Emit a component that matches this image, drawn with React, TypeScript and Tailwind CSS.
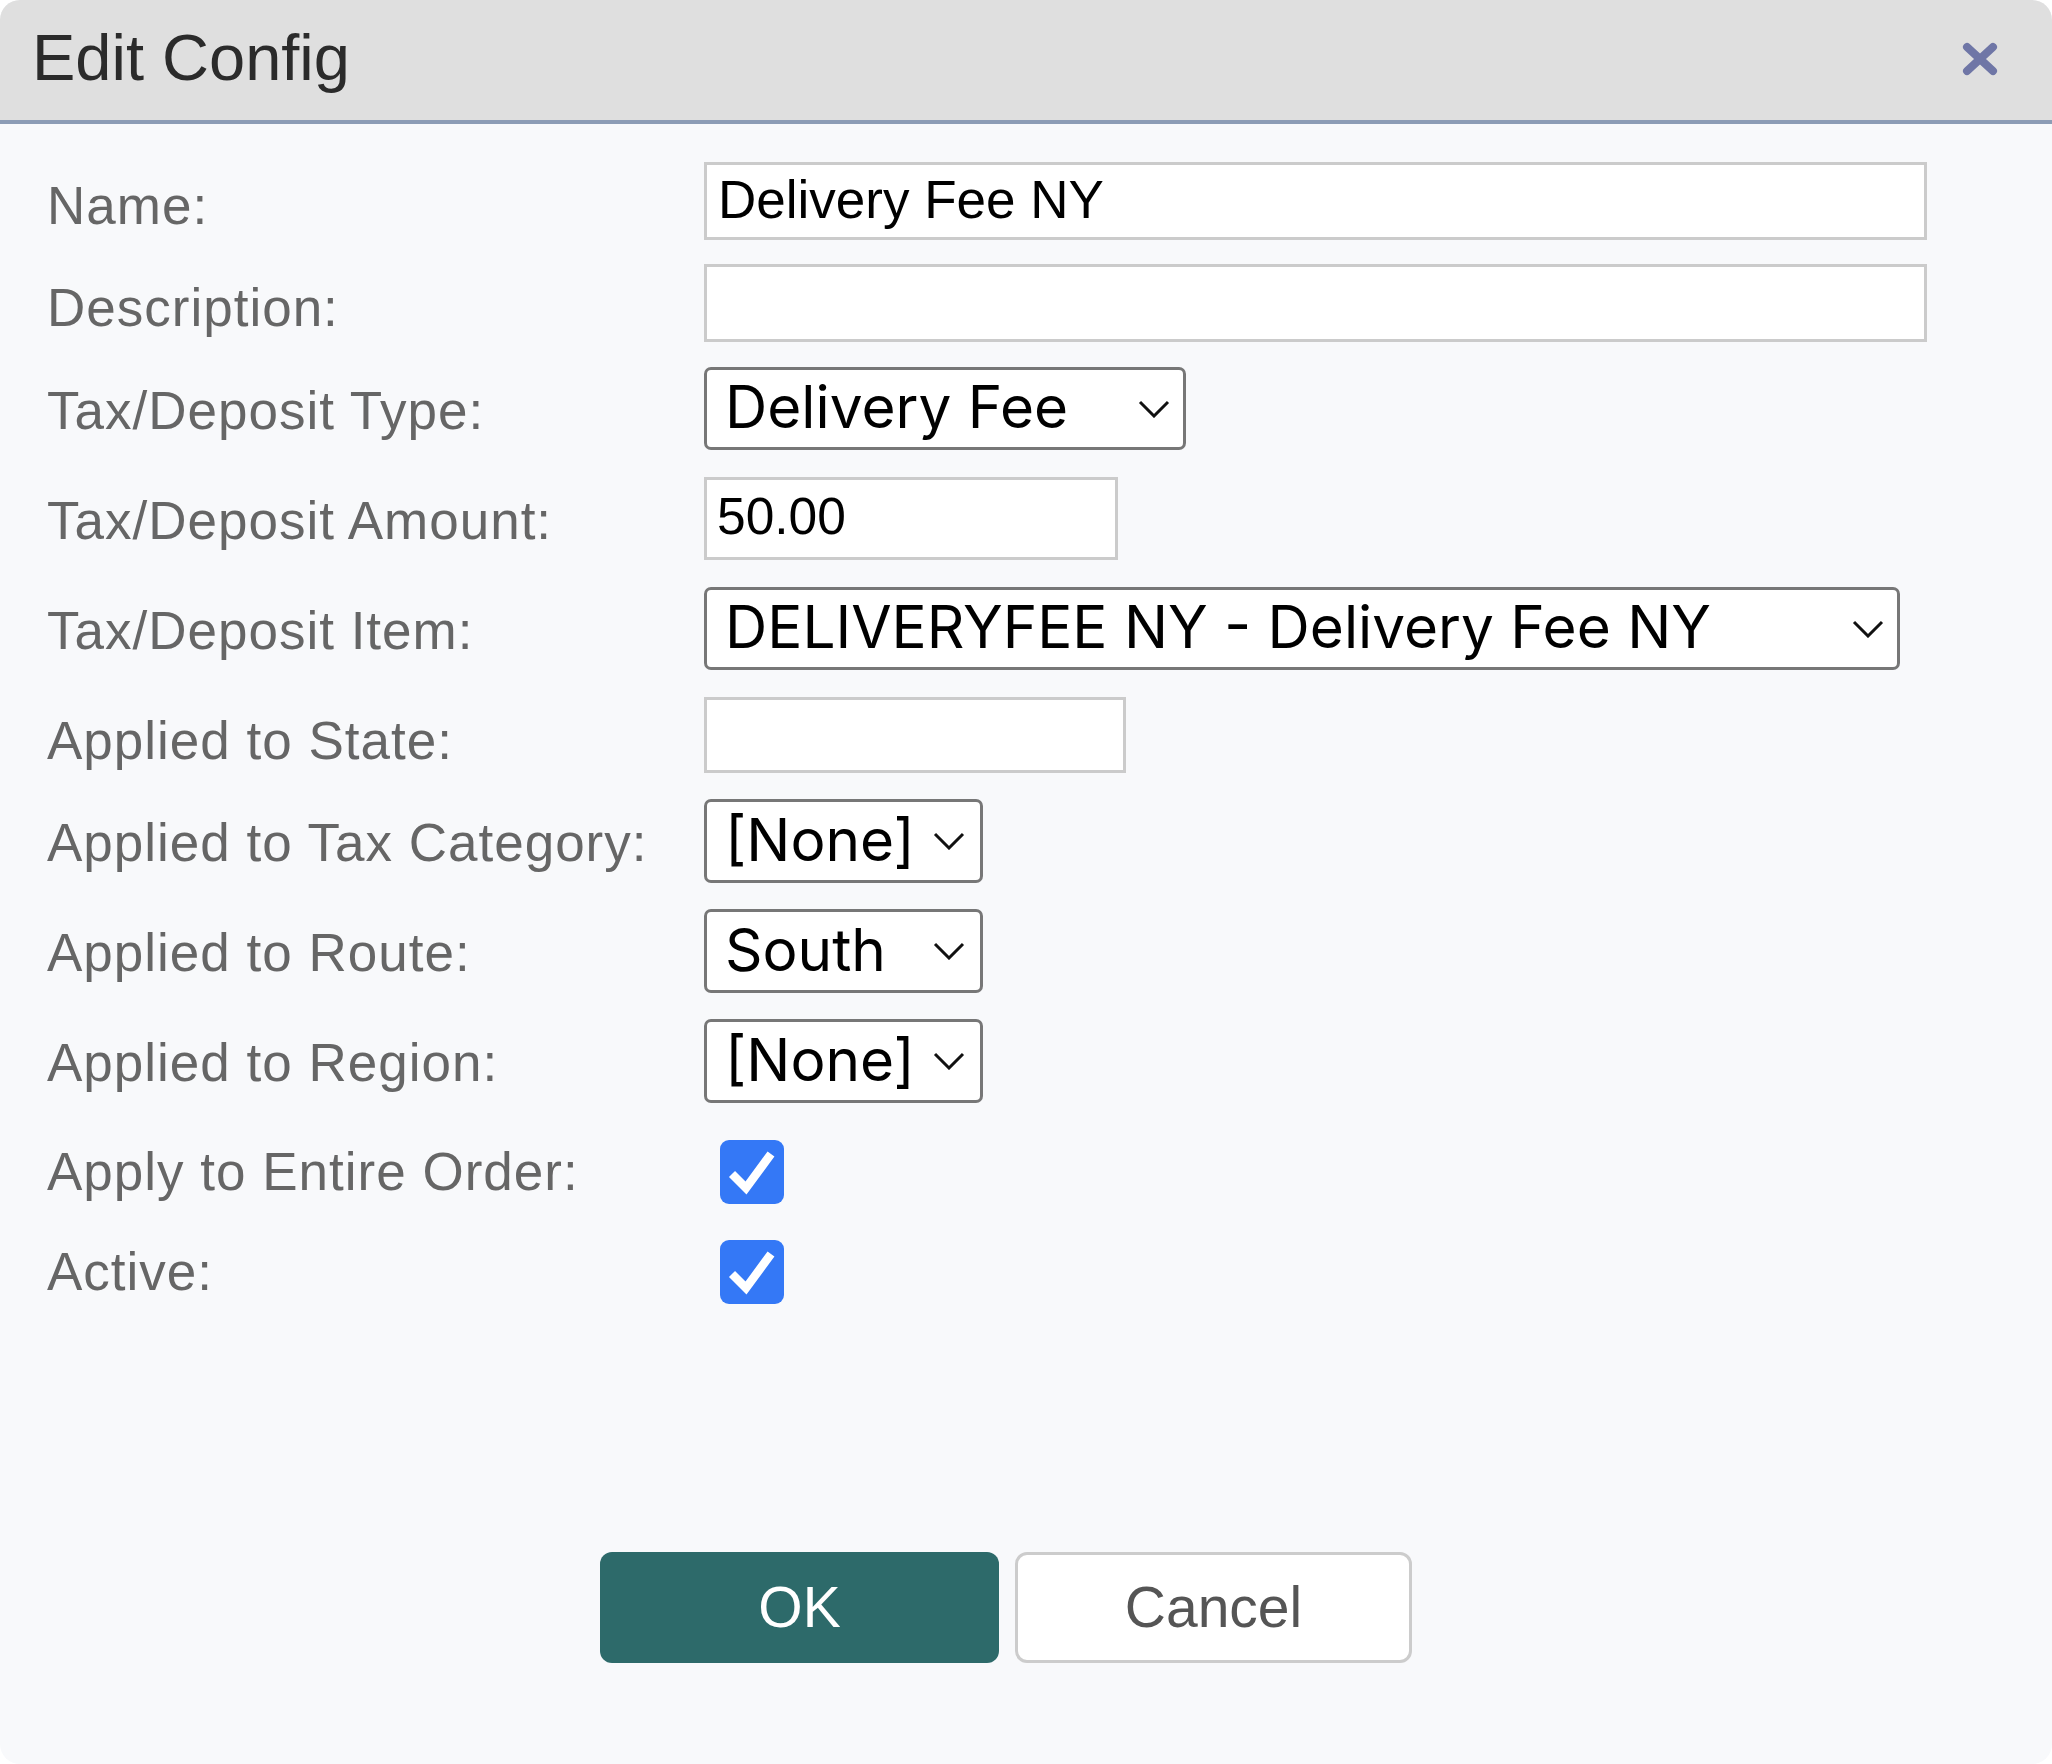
import type { ReactNode } from "react";
import clsx from "clsx";

function Chevron() {
  return (
    <svg width="32" height="18" viewBox="0 0 32 18" fill="none" className="shrink-0">
      <polyline points="2,2 16,16 30,2" stroke="#111" strokeWidth="3" strokeLinejoin="miter" />
    </svg>
  );
}

// labels sit at a fixed offset from the top of each row, not centred on the control
function Row({ label, className, children }: { label: string; className?: string; children: ReactNode }) {
  return (
    <div className={clsx("flex items-start", className)}>
      <div className="w-[657px] shrink-0 pt-[17px] font-['Liberation_Sans',Arial,sans-serif] text-[53px] leading-none tracking-[1px] text-[#666666]">
        {label}
      </div>
      {children}
    </div>
  );
}

function TextBox({ value, className }: { value?: string; className: string }) {
  return (
    <div
      className={clsx(
        "flex items-center border-[3px] border-[#cbcbcb] bg-white pb-[4px] font-['Liberation_Sans',Arial,sans-serif] leading-none text-black",
        className
      )}
    >
      {value}
    </div>
  );
}

function Select({ value, className }: { value: string; className: string }) {
  return (
    <div
      className={clsx(
        "flex items-center justify-between rounded-[7px] border-[3px] border-[#777777] bg-white pl-[18px] font-['Inter',sans-serif] text-[58.5px] leading-none text-black",
        className
      )}
    >
      <span className="pb-[2px]">{value}</span>
      <Chevron />
    </div>
  );
}

function CheckBox() {
  return (
    <div className="ml-[16px] mt-[12px] flex h-[64px] w-[64px] items-center justify-center rounded-[9px] bg-[#3478f6]">
      <svg width="64" height="64" viewBox="0 0 64 64" fill="none">
        <polyline points="12,34 26,48 51,14" stroke="#fff" strokeWidth="8.5" strokeLinejoin="miter" />
      </svg>
    </div>
  );
}

export default function App() {
  return (
    <div className="bg-white">
      <div className="flex h-[1764px] flex-col overflow-hidden rounded-[20px] bg-[#f8f9fb]">
        <header className="flex h-[124px] shrink-0 items-center justify-between border-b-4 border-[#8c9cb5] bg-[#dfdfdf] pl-[32px] pr-[54px] pb-[6px]">
          <h1 className="font-['Liberation_Sans',Arial,sans-serif] text-[65px] font-normal leading-none text-[#2b2b2b]">
            Edit Config
          </h1>
          <svg width="36" height="34" viewBox="0 0 36 34" fill="none" className="mt-[4px]">
            <line x1="5" y1="5" x2="31" y2="29" stroke="#6f76a6" strokeWidth="8" strokeLinecap="round" />
            <line x1="31" y1="5" x2="5" y2="29" stroke="#6f76a6" strokeWidth="8" strokeLinecap="round" />
          </svg>
        </header>

        <div className="flex flex-col pl-[47px] pr-[87px] pt-[38px]">
          <Row label="Name:">
            <TextBox value="Delivery Fee NY" className="h-[78px] w-[1223px] pl-[11px] text-[53px]" />
          </Row>
          <Row label="Description:" className="mt-[24px]">
            <TextBox className="h-[78px] w-[1223px] pl-[11px] text-[53px]" />
          </Row>
          <Row label="Tax/Deposit Type:" className="mt-[25px]">
            <Select value="Delivery Fee" className="h-[83px] w-[482px] pr-[13px]" />
          </Row>
          <Row label="Tax/Deposit Amount:" className="mt-[27px]">
            <TextBox value="50.00" className="h-[83px] w-[414px] pl-[10px] text-[51.5px]" />
          </Row>
          <Row label="Tax/Deposit Item:" className="mt-[27px]">
            <Select value="DELIVERYFEE NY - Delivery Fee NY" className="h-[83px] w-[1196px] pr-[13px]" />
          </Row>
          <Row label="Applied to State:" className="mt-[27px]">
            <TextBox className="h-[76px] w-[422px] pl-[10px] text-[50px]" />
          </Row>
          <Row label="Applied to Tax Category:" className="mt-[26px]">
            <Select value="[None]" className="h-[84px] w-[279px] pr-[15px]" />
          </Row>
          <Row label="Applied to Route:" className="mt-[26px]">
            <Select value="South" className="h-[84px] w-[279px] pr-[15px]" />
          </Row>
          <Row label="Applied to Region:" className="mt-[26px]">
            <Select value="[None]" className="h-[84px] w-[279px] pr-[15px]" />
          </Row>
          <Row label="Apply to Entire Order:" className="mt-[25px]">
            <CheckBox />
          </Row>
          <Row label="Active:" className="mt-[24px]">
            <CheckBox />
          </Row>

          <div className="mt-[248px] flex justify-center gap-[16px] font-['Liberation_Sans',Arial,sans-serif] text-[57px] leading-none">
            <button className="flex h-[111px] w-[399px] items-center justify-center rounded-[12px] bg-[#2d6a6a] text-white">
              OK
            </button>
            <button className="flex h-[111px] w-[397px] items-center justify-center rounded-[12px] border-[3px] border-[#cccccc] bg-white text-[#555555]">
              Cancel
            </button>
          </div>
        </div>
      </div>
    </div>
  );
}
